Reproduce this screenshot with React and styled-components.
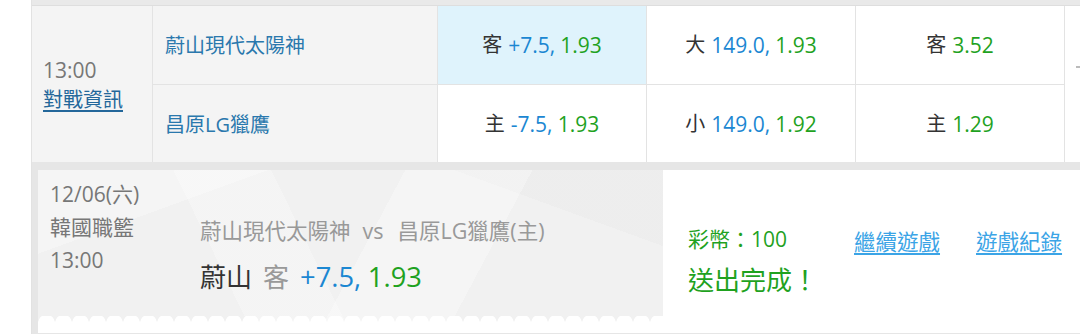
import React from 'react'
import styled, { createGlobalStyle } from 'styled-components'

const GlobalStyle = createGlobalStyle`
  html, body {
    margin: 0;
    padding: 0;
    background: #fff;
    font-family: "Open Sans", "Noto Sans CJK TC", sans-serif;
  }
`

const Page = styled.div`
  width: 1080px;
  height: 335px;
  overflow: hidden;
  padding-left: 31px;
  box-sizing: border-box;
`

const Frame = styled.div`
  border-left: 1px solid #e2e2e2;
  width: 1100px;
`

const TopBand = styled.div`
  height: 5px;
  background: #e9e9e9;
  border-bottom: 1px solid #dedede;
`

const Table = styled.div`
  display: grid;
  grid-template-columns: 120px 284px 208px 208px 208px 1fr;
  grid-template-rows: 78px 77px;
  gap: 1px;
  background: #e3e3e3;
`

const Cell = styled.div`
  display: flex;
  align-items: center;
  justify-content: ${({ $left }) => ($left ? 'flex-start' : 'center')};
  background: ${({ $bg }) => $bg || '#fff'};
  font-size: 20px;
  line-height: 28px;
  color: #333;
  padding-left: ${({ $left }) => ($left ? '12px' : '0')};
  grid-row: ${({ $span }) => ($span ? 'span 2' : 'auto')};
`

const TimeCell = styled(Cell)`
  flex-direction: column;
  align-items: flex-start;
  justify-content: center;
  padding-left: 11px;
  padding-top: 2px;
`

const Time = styled.div`
  color: #777;
  font-size: 21px;
  line-height: 29px;
`

const InfoLink = styled.a`
  color: #23679a;
  font-size: 20px;
  line-height: 29px;
  text-decoration: underline;
  text-underline-offset: 3px;
`

const Team = styled.span`
  color: #2a78ad;
  position: relative;
  top: 1px;
`

const Label = styled.span`
  color: ${({ $muted }) => ($muted ? '#999' : '#333')};
  margin-right: ${({ $gap }) => $gap || 6}px;
`

const Line = styled.span`
  color: #1b87d2;
  font-size: 1.05em;
`

const Odds = styled.span`
  color: #1fa21f;
  font-size: 1.05em;
`

const EdgeCell = styled(Cell)`
  align-items: flex-start;
  justify-content: flex-start;
  padding-top: 60px;
  padding-left: 11px;
`

const Dash = styled.span`
  width: 4px;
  height: 2px;
  background: #bbb;
`

const Bottom = styled.div`
  background: #e6e6e6;
  padding: 8px 0 1px 6px;
`

const Receipt = styled.div`
  display: flex;
  background: #fff;
  height: 163px;
`

const Ticket = styled.div`
  position: relative;
  width: 625px;
  height: 153px;
  box-sizing: border-box;
  display: flex;
  padding: 8px 0 0 12px;
  background-color: #f1f1f1;
  background-image:
    linear-gradient(118deg, transparent 52%, rgba(255, 255, 255, 0.3) 52%, rgba(255, 255, 255, 0.3) 70%, transparent 70%),
    linear-gradient(64deg, transparent 30%, rgba(255, 255, 255, 0.25) 30%, rgba(255, 255, 255, 0.25) 44%, transparent 44%),
    linear-gradient(160deg, rgba(255, 255, 255, 0.3) 0, rgba(255, 255, 255, 0.3) 22%, transparent 22%),
    linear-gradient(20deg, transparent 80%, rgba(232, 232, 232, 0.4) 80%);

  &::after {
    content: '';
    position: absolute;
    left: 0;
    right: 0;
    bottom: 0;
    height: 7px;
    background: radial-gradient(circle at 50% 100%, #fff 8px, transparent 8.6px) 0 0 / 17px 7px repeat-x;
  }
`

const Info = styled.div`
  width: 150px;
  display: flex;
  flex-direction: column;
  color: #777;
  font-size: 21px;
  line-height: 33px;
`

const Match = styled.div`
  padding-top: 38px;
  display: flex;
  flex-direction: column;
`

const Teams = styled.div`
  color: #999;
  font-size: 21.5px;
  line-height: 30px;
`

const Vs = styled.span`
  margin: 0 14px 0 12px;
`

const Bet = styled.div`
  margin-top: 11px;
  font-size: 26px;
  line-height: 40px;
  color: #333;
`

const Result = styled.div`
  display: flex;
  align-items: flex-start;
  padding: 55px 0 0 25px;
`

const Status = styled.div`
  width: 166px;
  display: flex;
  flex-direction: column;
  color: #1fa21f;
`

const Coins = styled.div`
  font-size: 21px;
  line-height: 28px;
`

const Done = styled.div`
  margin-top: 9px;
  font-size: 26px;
  line-height: 36px;
`

const Actions = styled.div`
  display: flex;
  gap: 36px;
  margin-top: 3px;
`

const ActionLink = styled.a`
  color: #3ba4e6;
  font-size: 21.5px;
  line-height: 28px;
  text-decoration: underline;
  text-underline-offset: 3px;
`

const rows = [
  { team: '蔚山現代太陽神', side: '客', line: '+7.5,', odds: '1.93', ou: '大', total: '149.0,', ouOdds: '1.93', ml: '3.52', hl: true },
  { team: '昌原LG獵鷹', side: '主', line: '-7.5,', odds: '1.93', ou: '小', total: '149.0,', ouOdds: '1.92', ml: '1.29' },
]

export default function App() {
  return (
    <Page>
      <GlobalStyle />
      <Frame>
        <TopBand />
        <Table>
          <TimeCell $bg="#f4f4f4" $span>
            <Time>13:00</Time>
            <InfoLink href="#">對戰資訊</InfoLink>
          </TimeCell>
          {rows.map((r, i) => (
            <React.Fragment key={r.team}>
              <Cell $bg="#f4f4f4" $left>
                <Team>{r.team}</Team>
              </Cell>
              <Cell $bg={r.hl ? '#dff3fc' : '#fff'}>
                <Label>{r.side}</Label>
                <Line>{r.line}</Line>&nbsp;<Odds>{r.odds}</Odds>
              </Cell>
              <Cell>
                <Label>{r.ou}</Label>
                <Line>{r.total}</Line>&nbsp;<Odds>{r.ouOdds}</Odds>
              </Cell>
              <Cell>
                <Label>{r.side}</Label>
                <Odds>{r.ml}</Odds>
              </Cell>
              {i === 0 && (
                <EdgeCell $span>
                  <Dash />
                </EdgeCell>
              )}
            </React.Fragment>
          ))}
        </Table>
        <Bottom>
          <Receipt>
            <Ticket>
              <Info>
                <span>12/06(六)</span>
                <span>韓國職籃</span>
                <span>13:00</span>
              </Info>
              <Match>
                <Teams>
                  蔚山現代太陽神<Vs>vs</Vs>昌原LG獵鷹(主)
                </Teams>
                <Bet>
                  <Label $gap={11}>蔚山</Label>
                  <Label $muted $gap={11}>客</Label>
                  <Line>+7.5,</Line>&nbsp;<Odds>1.93</Odds>
                </Bet>
              </Match>
            </Ticket>
            <Result>
              <Status>
                <Coins>彩幣：100</Coins>
                <Done>送出完成！</Done>
              </Status>
              <Actions>
                <ActionLink href="#">繼續遊戲</ActionLink>
                <ActionLink href="#">遊戲紀錄</ActionLink>
              </Actions>
            </Result>
          </Receipt>
        </Bottom>
      </Frame>
    </Page>
  )
}
